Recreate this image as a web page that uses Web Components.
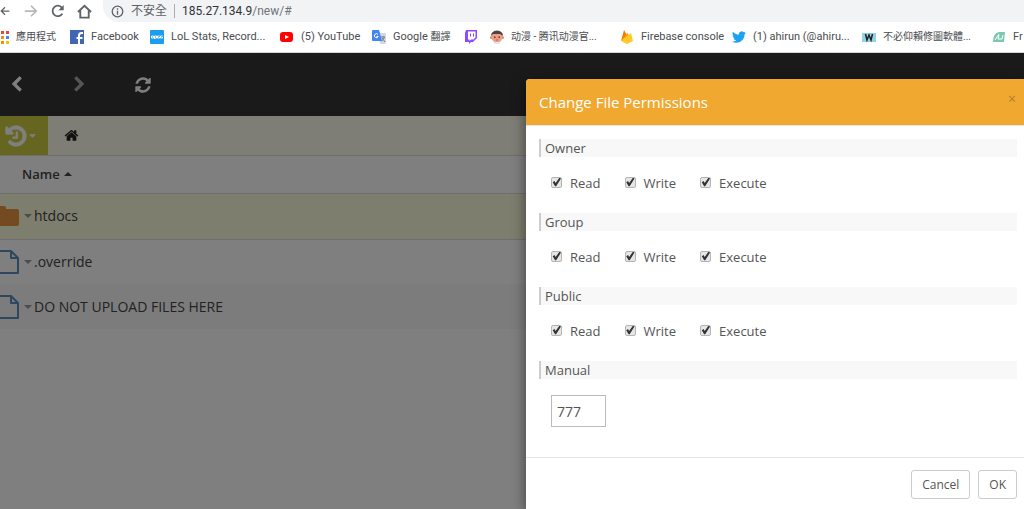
<!DOCTYPE html>
<html lang="zh-Hant">
<head>
<meta charset="utf-8">
<title>File manager</title>
<style>
  body {
    margin: 0;
    height: 100vh;
    overflow: hidden;
    display: flex;
    flex-direction: column;
    font-family: "Open Sans", "Noto Sans CJK TC", sans-serif;
    background: #fff;
  }
  file-manager { flex: 1; }
</style>
</head>
<body>
<browser-bar></browser-bar>
<file-manager>
  <permissions-dialog slot="dialog" heading="Change File Permissions">
    <permission-group name="Owner"></permission-group>
    <permission-group name="Group"></permission-group>
    <permission-group name="Public"></permission-group>
    <manual-mode value="777"></manual-mode>
  </permissions-dialog>
</file-manager>

<script>
// icons, all in one place
const FA = '0 0 1792 1792';
const ICONS = {
  back: ['0 0 16 16', '<path d="M15 8H2M8 2L2 8l6 6" fill="none" stroke="currentColor" stroke-width="2"/>'],
  forward: ['0 0 16 16', '<path d="M1 8h13M8 2l6 6-6 6" fill="none" stroke="currentColor" stroke-width="2"/>'],
  reload: ['0 0 16 16', '<path d="M13 11A6 6 0 1 1 12.500 4.200" fill="none" stroke="currentColor" stroke-width="2"/><path d="M14.500 1v6h-6z" fill="currentColor"/>'],
  house: ['0 0 16 16', '<path d="M1 8.500L8 2l7 6.500M3.500 7v7.500h9V7" fill="none" stroke="currentColor" stroke-width="2"/>'],
  info: ['0 0 16 16', '<circle cx="8" cy="8" r="6.500" fill="none" stroke="currentColor" stroke-width="1.600"/><path d="M7.200 7h1.600v5H7.200zM7.200 4h1.600v1.700H7.200z" fill="currentColor"/>'],
  left: [FA, '<path fill="currentColor" d="M1427 301l-531 531 531 531q19 19 19 45t-19 45l-166 166q-19 19-45 19t-45-19l-742-742q-19-19-19-45t19-45l742-742q19-19 45-19t45 19l166 166q19 19 19 45t-19 45z"/>'],
  right: [FA, '<path fill="currentColor" d="M1363 877l-742 742q-19 19-45 19t-45-19l-166-166q-19-19-19-45t19-45l531-531-531-531q-19-19-19-45t19-45l166-166q19-19 45-19t45 19l742 742q19 19 19 45t-19 45z"/>'],
  refresh: [FA, '<path fill="currentColor" d="M1639 1056q0 5-1 7-64 268-268 434.500t-478 166.500q-146 0-282.500-55t-243.500-157l-129 129q-19 19-45 19t-45-19-19-45v-448q0-26 19-45t45-19h448q26 0 45 19t19 45-19 45l-137 137q71 66 161 102t187 36q134 0 250-65t186-179q11-17 53-117 8-23 30-23h192q13 0 22.500 9.500t9.500 22.500zm25-800v448q0 26-19 45t-45 19h-448q-26 0-45-19t-19-45 19-45l138-138q-148-137-349-137-134 0-250 65t-186 179q-11 17-53 117-8 23-30 23h-199q-13 0-22.500-9.500t-9.500-22.500v-7q65-268 270-434.500t480-166.500q146 0 284 55.500t245 156.500l130-129q19-19 45-19t45 19 19 45z"/>'],
  history: [FA, '<path fill="currentColor" stroke="currentColor" stroke-width="50" d="M1664 896q0 156-61 298t-164 245-245 164-298 61q-172 0-327-72.500t-264-204.500q-7-10-6.500-22.500t8.500-20.500l137-138q10-9 25-9 16 2 23 12 73 95 179 147t225 52q104 0 198.500-40.500t163.500-109.500 109.500-163.500 40.500-198.500-40.500-198.500-109.500-163.500-163.500-109.500-198.500-40.500q-98 0-188 35.500t-160 101.500l137 138q31 30 14 69-17 40-59 40h-448q-26 0-45-19t-19-45v-448q0-42 40-59 39-17 69 14l130 129q107-101 244.500-156.500t284.500-55.500q156 0 298 61t245 164 164 245 61 298zm-640-288v448q0 14-9 23t-23 9h-320q-14 0-23-9t-9-23v-64q0-14 9-23t23-9h224v-352q0-14 9-23t23-9h64q14 0 23 9t9 23z"/>'],
  home: [FA, '<path fill="currentColor" d="M1472 992v480q0 26-19 45t-45 19h-384v-384h-256v384h-384q-26 0-45-19t-19-45v-480q0-1 .5-3t.5-3l575-474 575 474q1 2 1 6zm223-69l-62 74q-8 9-21 11h-3q-13 0-21-7l-692-577-692 577q-12 8-24 7-13-2-21-11l-62-74q-8-10-7-23.500t11-21.500l719-599q32-26 76-26t76 26l244 204v-195q0-14 9-23t23-9h192q14 0 23 9t9 23v408l219 182q10 8 11 21.500t-7 23.500z"/>'],
  caret: ['0 0 8 4', '<path fill="currentColor" d="M0 0h8L4 4z"/>'],
  caretUp: ['0 0 8 4', '<path fill="currentColor" d="M0 4h8L4 0z"/>'],
  folder: ['0 0 24 20', '<path fill="#e89642" d="M2 0h7q2 0 2 2v1h11q2 0 2 2v13q0 2-2 2H2q-2 0-2-2V2q0-2 2-2z"/>'],
  file: ['0 0 24 24', '<path fill="none" stroke="#5a90bd" stroke-width="2" stroke-linejoin="round" d="M1 1h15l7 7v15H1zM16 1v7h7"/>'],
  apps: ['0 0 8 14', '<path fill="#ea4335" d="M0 1h3v3H0zM5 1h3v3H5z"/><path fill="#fb8c00" d="M0 6h3v3H0zM0 11h3v3H0z"/><path fill="#4285f4" d="M5 6h3v3H5z"/><path fill="#fbbc04" d="M5 11h3v3H5z"/>'],
  facebook: ['0 0 14 14', '<path fill="#4267b2" d="M0 0h14v14H0z"/><path fill="none" stroke="#fff" stroke-width="2" d="M9 14V5.500Q9 3 11.500 3H13M6.500 8H12.500"/>'],
  opgg: ['0 0 14 14', '<rect width="14" height="14" rx="1" fill="#1b9df0"/><path fill="none" stroke="#fff" d="M1.500 6h2v2h-2zM4.500 9V6h2v2h-2M9.500 6h-2v2h2V7M12.500 6h-2v2h2V7"/>'],
  youtube: ['0 0 14 14', '<rect y="2" width="13" height="10" rx="3" fill="#f00"/><path fill="#fff" d="M5 5l4 2-4 2z"/>'],
  translate: ['0 0 14 14', '<path fill="#d5d8dc" d="M6 3h7q1 0 1 1v9q0 1-1 1H8z"/><path fill="#4285f4" d="M1 0h6l3 11H1q-1 0-1-1V1q0-1 1-1z"/><path fill="none" stroke="#fff" d="M6 4.500a2 2 0 1 0 .3 2H4.500"/><path fill="none" stroke="#6d7f95" d="M9 7h4M11 6v1M12.500 7q-1 3-3 4M10 8l3 4"/>'],
  twitch: ['0 0 14 14', '<path fill="#9146ff" d="M2 0h11v8l-4 4H7l-2 2v-2H1V3z"/><path fill="#fff" d="M4 1.500h7.500v6l-2 2H7L5.500 11V9.500H4z"/><path fill="#9146ff" d="M6 3.500h1v3H6zM9 3.500h1v3H9z"/>'],
  comic: ['0 0 14 14', '<circle cx="1.500" cy="7.500" r="1.500" fill="#d98873"/><circle cx="12.500" cy="7.500" r="1.500" fill="#d98873"/><circle cx="7" cy="7" r="5.500" fill="#eda088"/><path fill="#57413e" d="M1 6Q1 1 7 0.500 13 1 13 6L10 4 3 4z"/><path fill="#57413e" d="M4 6.500h1.500V8H4zM8.500 6.500H10V8H8.500z"/><path fill="#c84f4c" d="M5.500 9.500h3L7 11z"/><path fill="#e5e5e5" d="M4 12h6v2H4z"/>'],
  firebase: ['0 0 14 14', '<path fill="#f57c00" d="M1 11L4 0l3 5z"/><path fill="#ffa000" d="M1 11L7.500 3 10 7z"/><path fill="#ffca28" d="M1 11l10-8 2 8-6 3z"/>'],
  twitter: ['0 0 24 24', '<path fill="#1da1f2" d="M23.950 4.570a10 10 0 0 1-2.820.78 4.960 4.960 0 0 0 2.160-2.720c-.95.55-2 .96-3.130 1.180a4.920 4.920 0 0 0-8.380 4.480C7.690 8.090 4.070 6.130 1.640 3.160a4.920 4.920 0 0 0 1.520 6.570 4.900 4.900 0 0 1-2.230-.61v.06a4.920 4.920 0 0 0 3.950 4.830 5 5 0 0 1-2.210.08 4.940 4.940 0 0 0 4.600 3.420A9.870 9.870 0 0 1 0 19.540a14 14 0 0 0 7.550 2.210c9.050 0 14-7.500 14-13.980l-.02-.64a9.900 9.900 0 0 0 2.420-2.560z"/>'],
  wsite: ['0 0 14 14', '<path fill="#93d3e6" d="M0 3h14v9H0z"/><path fill="none" stroke="#222" stroke-width="1.500" d="M3.500 4l1.500 6 2-5 2 5 1.500-6"/>'],
  leaf: ['0 0 14 14', '<path fill="#7cc7b0" d="M1 12Q1 3 7 2h6l-1 10H1z"/><path fill="none" stroke="#fff" d="M3 10l4-6M7 5l-1 4h4l1-4"/>']
};

function icon(name, w, h = w) {
  const [box, body] = ICONS[name];
  return `<svg viewBox="${box}" width="${w}" height="${h}" aria-hidden="true">${body}</svg>`;
}

// base class: writes the markup into an open shadow root
class Base extends HTMLElement {
  constructor() {
    super();
    this.attachShadow({ mode: 'open' });
  }
  connectedCallback() {
    this.shadowRoot.innerHTML = `
      <style>
        * { box-sizing: border-box; }
        svg { display: block; flex: none; }
        button { font: inherit; color: inherit; background: none; border: 0; padding: 0; margin: 0; }
        a { color: inherit; text-decoration: none; }
      </style>` + this.render();
  }
}

// one bookmark; --slot is the width it takes in the bar
class BookmarkLink extends Base {
  render() {
    const name = this.getAttribute('icon');
    return `
      <style>
        :host { display: block; flex: none; width: var(--slot, 130px); }
        a { display: flex; align-items: center; gap: 7px; white-space: nowrap; }
      </style>
      <a href="#">${icon(name, name === 'apps' ? 8 : 14, 14)}<span><slot></slot></span></a>`;
  }
}
customElements.define('bookmark-link', BookmarkLink);

class BrowserBar extends Base {
  render() {
    return `
      <style>
        :host {
          display: block; background: #fff; border-bottom: 1px solid #d5d7da;
          font-family: Roboto, "Noto Sans CJK TC", sans-serif;
        }
        .nav { display: flex; align-items: center; height: 22px; color: #5f6368; }
        .nav button { width: 27px; flex: none; display: flex; justify-content: center; }
        .nav .first { width: 17px; justify-content: flex-start; }
        .nav .off { color: #b5b7ba; }
        .address {
          flex: 1; display: flex; align-items: center; height: 22px;
          margin-left: 5px; padding: 0 8px; gap: 7px;
          background: #f1f3f4; border-radius: 0 0 0 16px;
          font-size: 12px; line-height: 18px;
        }
        .sep { width: 1px; height: 14px; background: #aaadb0; }
        .url { flex: 1; color: #70757a; }
        .url b { font-weight: normal; color: #303236; }
        .marks {
          display: flex; align-items: center; height: 30px; overflow: hidden;
          padding-left: 1px; color: #4a4d51; font-size: 11px; line-height: 16px;
        }
        .zh { font-size: 10px; }
        .s { --slot: 26px; }
        .m { --slot: 80px; }
        .l { --slot: 92px; }
        .xl { --slot: 112px; }
        .apps { --slot: 69px; }
      </style>
      <div class="nav">
        <button class="first" aria-label="Back">${icon('back', 10)}</button>
        <button class="off" aria-label="Forward">${icon('forward', 14)}</button>
        <button aria-label="Reload">${icon('reload', 14)}</button>
        <button aria-label="Home">${icon('house', 15)}</button>
        <div class="address">
          ${icon('info', 13)}
          <span>不安全</span><span class="sep"></span>
          <span class="url"><b>185.27.134.9</b>/new/#</span>
        </div>
      </div>
      <nav class="marks">
        <bookmark-link class="apps zh" icon="apps">應用程式</bookmark-link>
        <bookmark-link class="m" icon="facebook">Facebook</bookmark-link>
        <bookmark-link icon="opgg">LoL Stats, Record...</bookmark-link>
        <bookmark-link class="l" icon="youtube">(5) YouTube</bookmark-link>
        <bookmark-link class="l" icon="translate">Google <span class="zh">翻譯</span></bookmark-link>
        <bookmark-link class="s" icon="twitch"></bookmark-link>
        <bookmark-link class="zh" icon="comic">动漫 - 腾讯动漫官...</bookmark-link>
        <bookmark-link class="xl" icon="firebase">Firebase console</bookmark-link>
        <bookmark-link icon="twitter">(1) ahirun (@ahiru...</bookmark-link>
        <bookmark-link class="zh" icon="wsite">不必仰賴修圖軟體...</bookmark-link>
        <bookmark-link icon="leaf">Fr</bookmark-link>
      </nav>`;
  }
}
customElements.define('browser-bar', BrowserBar);

class FileManager extends Base {
  render() {
    const row = (name, type, cls) => `
      <tr class="${cls}"><td><div class="cell">
        <span class="pic">${type === 'folder' ? icon('folder', 24, 20) : icon('file', 24)}</span>
        <button class="drop" aria-label="Actions">${icon('caret', 8, 4)}</button>
        <a href="#">${name}</a>
      </div></td></tr>`;
    return `
      <style>
        :host { display: block; position: relative; overflow: hidden; background: #fff; color: #444; }
        .tools {
          display: flex; align-items: center; height: 63px; padding: 0 8px; gap: 46px;
          background: #353535; color: #fff;
        }
        .tools .off { color: #aaa; }
        .path { display: flex; height: 40px; background: #fdfdec; border-bottom: 1px solid #ddd; }
        .history {
          display: flex; align-items: center; gap: 1px; width: 48px; padding-left: 4px;
          background: #cccc40; color: #fff;
        }
        .crumb { display: flex; align-items: center; margin-left: 16px; color: #222; }
        table { width: 100%; border-collapse: collapse; }
        th { padding: 0 22px; height: 37px; border-bottom: 1px solid #ddd; text-align: left; font-size: 13px; font-weight: 600; line-height: 18px; }
        th button { display: flex; align-items: center; gap: 4px; }
        td { padding: 0; height: 45px; font-size: 14px; line-height: 20px; }
        .cell { display: flex; align-items: center; }
        .pic { width: 24px; display: flex; justify-content: flex-end; padding-right: 5px; }
        .drop { color: #999; padding-right: 2px; }
        .on td { height: 46px; background: #fbfcdc; border-bottom: 1px solid #ddd; }
        .alt td { background: #f9f9f9; }
        .shade {
          position: absolute; inset: 0; background: rgba(0, 0, 0, .5);
          display: flex; justify-content: flex-end; padding-top: 26px;
        }
      </style>
      <div class="tools">
        <button aria-label="Back">${icon('left', 17)}</button>
        <button class="off" aria-label="Forward">${icon('right', 17)}</button>
        <button aria-label="Refresh">${icon('refresh', 18)}</button>
      </div>
      <div class="path">
        <button class="history" aria-label="History">${icon('history', 24)}${icon('caret', 7, 4)}</button>
        <a class="crumb" href="#" aria-label="Home">${icon('home', 15)}</a>
      </div>
      <table>
        <thead><tr><th><button>Name ${icon('caretUp', 8, 4)}</button></th></tr></thead>
        <tbody>
          ${row('htdocs', 'folder', 'on')}
          ${row('.override', 'file', '')}
          ${row('DO NOT UPLOAD FILES HERE', 'file', 'alt')}
        </tbody>
      </table>
      <div class="shade"><slot name="dialog"></slot></div>`;
  }
}
customElements.define('file-manager', FileManager);

class PermissionsDialog extends Base {
  render() {
    return `
      <style>
        :host {
          display: flex; flex-direction: column; width: 498px; max-width: 100%;
          background: #fff; color: #555; border-radius: 4px 0 0 0; overflow: hidden;
          box-shadow: 0 4px 14px rgba(0, 0, 0, .5);
        }
        header {
          display: flex; flex: none; justify-content: space-between; align-items: center;
          height: 47px; padding: 0 8px 0 13px;
          background: #f0a830; color: #fff; border-bottom: 1px solid #e5e5e5;
        }
        h2 { margin: 0; font-size: 15px; font-weight: 400; line-height: 20px; }
        .close { color: #b0802c; font-size: 14px; line-height: 20px; align-self: flex-start; margin-top: 10px; }
        .body { display: flex; flex: none; flex-direction: column; gap: 20px; padding: 13px 7px 30px 13px; }
        footer {
          flex: 1; display: flex; justify-content: flex-end; align-items: flex-start; gap: 8px;
          padding: 12px 7px; border-top: 1px solid #e5e5e5;
        }
        footer button {
          height: 29px; padding: 0 10px; border: 1px solid #ccc; border-radius: 3px;
          background: #fff; font-size: 12px; line-height: 18px;
        }
      </style>
      <header>
        <h2>${this.getAttribute('heading')}</h2>
        <button class="close" aria-label="Close">×</button>
      </header>
      <div class="body"><slot></slot></div>
      <footer><button>Cancel</button><button>OK</button></footer>`;
  }
}
customElements.define('permissions-dialog', PermissionsDialog);

const TITLE_CSS = `
  :host { display: block; }
  h3 {
    margin: 0; padding-left: 4px; border-left: 2px solid #ccc; background: #f8f8f8;
    font-size: 13px; font-weight: 400; line-height: 18px;
  }`;

class PermissionGroup extends Base {
  render() {
    const name = this.getAttribute('name');
    const boxes = ['Read', 'Write', 'Execute'].map(p => `
      <label><input type="checkbox" checked> ${p}</label>`).join('');
    return `
      <style>
        ${TITLE_CSS}
        .boxes { display: flex; gap: 24px; padding: 17px 12px 1px; font-size: 13px; line-height: 18px; }
        label { display: flex; align-items: center; gap: 8px; }
        input {
          appearance: none; width: 11px; height: 11px; margin: 0 0 2px;
          border: 1px solid #b4b4b4; border-radius: 2px; background: #e6e6e6;
          display: grid;
        }
        input:checked::before {
          content: ""; background: #333;
          clip-path: polygon(8% 52%, 28% 40%, 40% 62%, 82% 2%, 100% 12%, 46% 98%, 34% 98%);
        }
      </style>
      <h3>${name}</h3>
      <div class="boxes" role="group" aria-label="${name}">${boxes}</div>`;
  }
}
customElements.define('permission-group', PermissionGroup);

class ManualMode extends Base {
  render() {
    return `
      <style>
        ${TITLE_CSS}
        label { display: block; }
        input {
          display: block; width: 55px; height: 32px; margin: 16px 12px 0; padding: 0 5px;
          border: 1px solid #bbb; background: #fff; color: #555;
          font: 14px/20px "Open Sans", sans-serif;
        }
      </style>
      <h3><label for="mode">Manual</label></h3>
      <input id="mode" type="text" value="${this.getAttribute('value')}">`;
  }
}
customElements.define('manual-mode', ManualMode);
</script>
</body>
</html>
